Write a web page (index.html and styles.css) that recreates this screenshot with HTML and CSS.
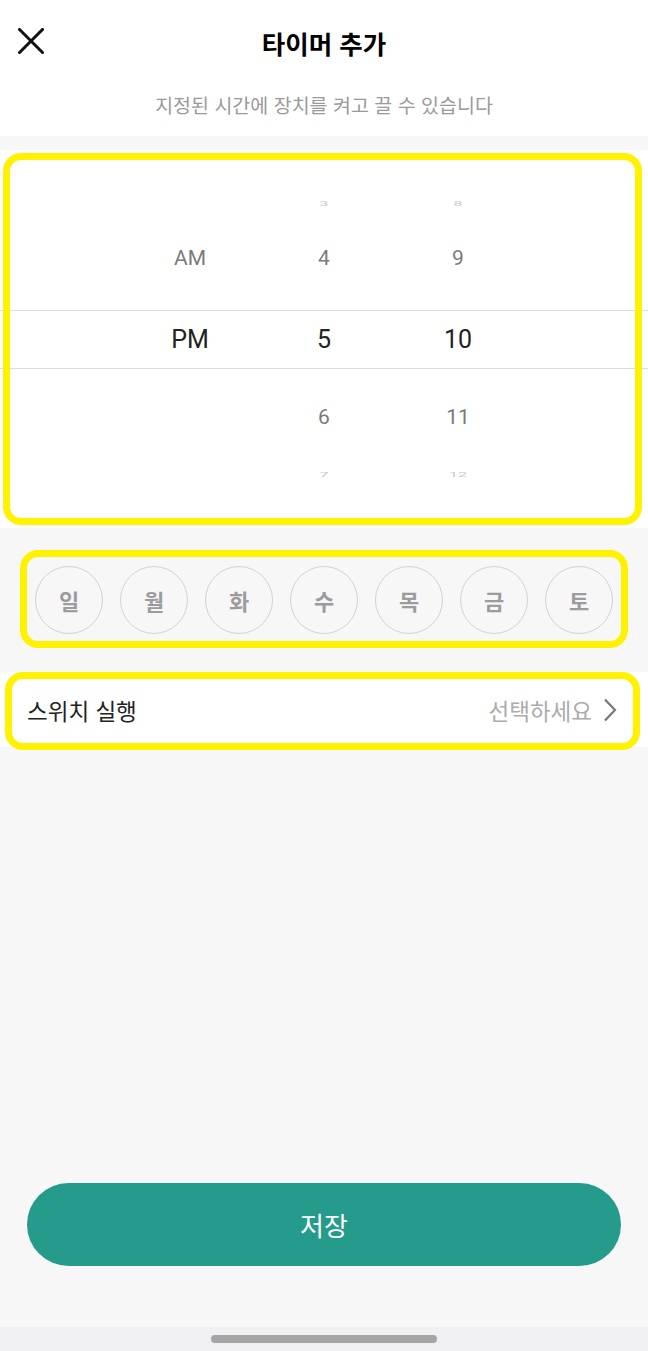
FILE: index.html
```html
<!DOCTYPE html>
<html lang="ko">
<head>
    <meta charset="UTF-8">
    <meta name="viewport" content="width=device-width, initial-scale=1.0">
    <title>타이머 추가</title>
    <link rel="stylesheet" href="styles.css">
</head>
<body>
    <header class="header">
        <div class="topbar">
            <button class="close-btn" aria-label="닫기">
                <svg width="26" height="26" viewBox="0 0 26 26">
                    <path d="M1.5 1.5 L24.5 24.5 M24.5 1.5 L1.5 24.5" stroke="#111" stroke-width="3" stroke-linecap="square" fill="none"/>
                </svg>
            </button>
            <h1 class="title">타이머 추가</h1>
        </div>
        <p class="subtitle">지정된 시간에 장치를 켜고 끌 수 있습니다</p>
    </header>

    <section class="picker mark mark-picker">
        <div class="wheel">
            <div class="wheel-row far">
                <span></span><span>3</span><span>8</span>
            </div>
            <div class="wheel-row near">
                <span>AM</span><span>4</span><span>9</span>
            </div>
            <div class="wheel-row selected">
                <span>PM</span><span>5</span><span>10</span>
            </div>
            <div class="wheel-row near">
                <span></span><span>6</span><span>11</span>
            </div>
            <div class="wheel-row far bottom">
                <span></span><span>7</span><span>12</span>
            </div>
        </div>
    </section>

    <section class="days mark mark-days">
        <div class="day">일</div>
        <div class="day">월</div>
        <div class="day">화</div>
        <div class="day">수</div>
        <div class="day">목</div>
        <div class="day">금</div>
        <div class="day">토</div>
    </section>

    <section class="action-row mark mark-action">
        <span class="action-label">스위치 실행</span>
        <span class="action-value">
            선택하세요
            <svg width="14" height="24" viewBox="0 0 14 24">
                <path d="M2 1.5 L12 12 L2 22.5" stroke="#777" stroke-width="2.2" fill="none"/>
            </svg>
        </span>
    </section>

    <div class="spacer"></div>

    <div class="footer">
        <button class="save-btn">저장</button>
    </div>

    <div class="navbar">
        <div class="nav-handle"></div>
    </div>
</body>
</html>
```

FILE: styles.css
```css
body {
    margin: 0;
    padding: 0;
    width: 648px;
    min-height: 1351px;
    display: flex;
    flex-direction: column;
    background: #f7f7f7;
    font-family: "Noto Sans CJK KR", Roboto, sans-serif;
    color: #222;
}

/* Header */
.header {
    background: #fff;
    margin-bottom: 14px;
}

.topbar {
    position: relative;
    height: 84px;
    display: flex;
    align-items: center;
    justify-content: center;
}

.close-btn {
    position: absolute;
    left: 18px;
    top: 28px;
    padding: 0;
    border: none;
    background: none;
    line-height: 0;
}

.title {
    margin: 0;
    font-size: 25.5px;
    font-weight: 700;
    color: #000;
}

.subtitle {
    margin: 0;
    height: 52px;
    line-height: 42px;
    text-align: center;
    font-size: 19.5px;
    color: #9a9a9a;
}

/* Yellow marks */
.mark {
    position: relative;
}

.mark::after {
    content: "";
    position: absolute;
    border: 7px solid #fff200;
    border-radius: 18px;
    pointer-events: none;
}

.mark-picker::after {
    top: 3px;
    left: 3px;
    right: 6px;
    bottom: 3px;
}

.mark-days::after {
    top: 22px;
    left: 20px;
    right: 20px;
    bottom: 24px;
}

.mark-action::after {
    top: 0;
    left: 5px;
    right: 8px;
    bottom: -3px;
}

/* Time picker */
.picker {
    background: #fff;
    height: 378px;
    display: flex;
    align-items: center;
}

.wheel {
    width: 100%;
    display: flex;
    flex-direction: column;
    font-family: Roboto, "Noto Sans", sans-serif;
}

.wheel-row {
    display: grid;
    grid-template-columns: 134px 134px 134px;
    justify-content: center;
    align-items: center;
    text-align: center;
}

.wheel-row.far {
    height: 32px;
    font-size: 16px;
    color: #c8c8c8;
}

.wheel-row.far span {
    display: block;
    transform: scaleY(0.4);
}

.wheel-row.near {
    height: 80px;
    font-size: 21px;
    color: #7a7a7a;
}

.wheel-row.near span {
    margin-top: -3px;
}

.wheel-row.selected {
    height: 57px;
    margin: 10px 0;
    border-top: 1px solid #dcdcdc;
    border-bottom: 1px solid #dcdcdc;
    font-size: 25px;
    color: #222;
}

/* Days */
.days {
    height: 144px;
    display: flex;
    align-items: center;
    justify-content: center;
    gap: 17px;
}

.day {
    width: 66px;
    height: 66px;
    border: 1.5px solid #d2d2d2;
    border-radius: 50%;
    display: flex;
    align-items: center;
    justify-content: center;
    font-size: 22px;
    font-weight: 700;
    color: #9c9c9c;
}

/* Switch row */
.action-row {
    background: #fff;
    height: 75px;
    display: flex;
    align-items: center;
    justify-content: space-between;
    padding: 0 31px 0 27px;
}

.action-label {
    font-size: 22.5px;
    color: #222;
}

.action-value {
    display: flex;
    align-items: center;
    gap: 11px;
    font-size: 22.5px;
    color: #ababab;
}

.spacer {
    flex: 1;
}

/* Save */
.footer {
    padding: 0 27px 61px;
}

.save-btn {
    width: 100%;
    height: 83px;
    border: none;
    border-radius: 42px;
    background: #259b8c;
    color: #fff;
    font-family: "Noto Sans CJK KR", sans-serif;
    font-size: 26px;
}

.navbar {
    height: 24px;
    background: #f0f0f2;
    display: flex;
    justify-content: center;
    padding-top: 8px;
    box-sizing: border-box;
}

.nav-handle {
    width: 226px;
    height: 8px;
    border-radius: 4px;
    background: #a5a5a5;
}
```
